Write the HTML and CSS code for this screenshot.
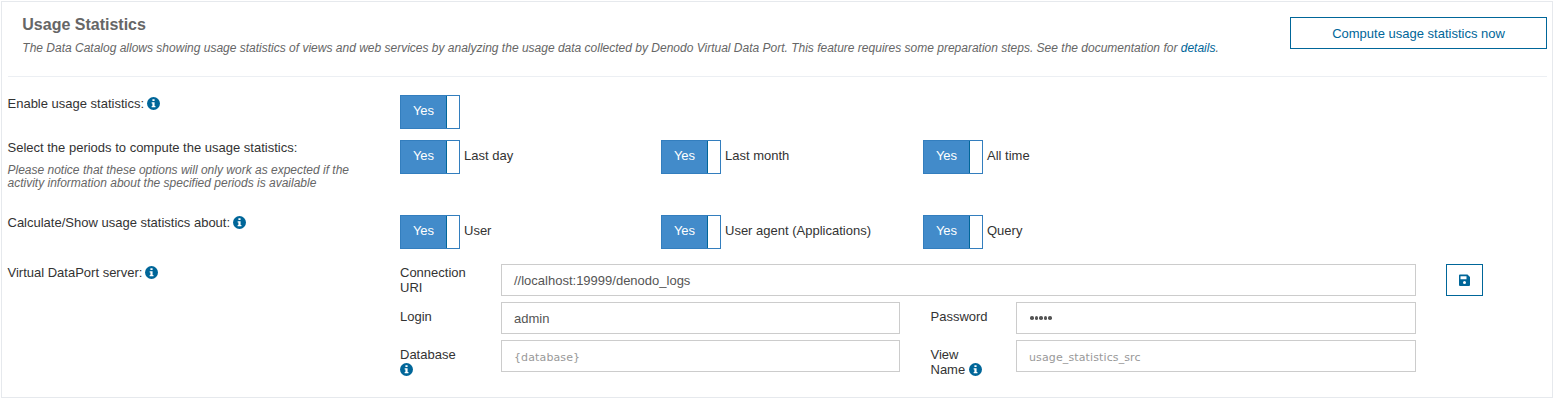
FILE: index.html
```html
<!DOCTYPE html>
<html lang="en">
<head>
<meta charset="utf-8">
<title>Usage Statistics</title>
<link rel="stylesheet" href="styles.css">
</head>
<body>
<svg class="defs" width="0" height="0">
  <symbol id="info" viewBox="0 0 12 12">
    <circle cx="6" cy="6" r="6" fill="#069"/>
    <path fill="#fff" d="M5 2h2v1.700H5zM4.300 4.800H7v3.500h.8v1.200H4.300V8.300H5V6h-.7z"/>
  </symbol>
</svg>
<section class="panel">
  <header class="head">
    <div class="intro">
      <h1 class="title">Usage Statistics</h1>
      <p class="desc">The Data Catalog allows showing usage statistics of views and web services by analyzing the usage data collected by Denodo Virtual Data Port. This feature requires some preparation steps. See the documentation for <a class="link">details</a>.</p>
    </div>
    <button class="compute">Compute usage statistics now</button>
  </header>

  <div class="row row-enable">
    <div class="label">Enable usage statistics: <svg class="info"><use href="#info"/></svg></div>
    <div class="option"><span class="toggle"><b class="on">Yes</b></span></div>
  </div>

  <div class="row row-periods">
    <div class="label">Select the periods to compute the usage statistics:
      <p class="note">Please notice that these options will only work as expected if the<br>activity information about the specified periods is available</p>
    </div>
    <div class="option"><span class="toggle"><b class="on">Yes</b></span><span>Last day</span></div>
    <div class="option"><span class="toggle"><b class="on">Yes</b></span><span>Last month</span></div>
    <div class="option"><span class="toggle"><b class="on">Yes</b></span><span>All time</span></div>
  </div>

  <div class="row row-about">
    <div class="label">Calculate/Show usage statistics about: <svg class="info"><use href="#info"/></svg></div>
    <div class="option"><span class="toggle"><b class="on">Yes</b></span><span>User</span></div>
    <div class="option"><span class="toggle"><b class="on">Yes</b></span><span>User agent (Applications)</span></div>
    <div class="option"><span class="toggle"><b class="on">Yes</b></span><span>Query</span></div>
  </div>

  <div class="row row-server">
    <div class="label">Virtual DataPort server: <svg class="info"><use href="#info"/></svg></div>
    <div class="form">
      <div class="name first">Connection<br>URI</div>
      <div class="field wide">//localhost:19999/denodo_logs</div>
      <div class="name">Login</div>
      <div class="field">admin</div>
      <div class="name second">Password</div>
      <div class="field"><span class="dots"><i></i><i></i><i></i><i></i><i></i></span></div>
      <div class="name">Database<br><svg class="info"><use href="#info"/></svg></div>
      <div class="field hint">{database}</div>
      <div class="name second">View<br>Name <svg class="info"><use href="#info"/></svg></div>
      <div class="field hint">usage_statistics_src</div>
    </div>
    <button class="save" aria-label="Save">
      <svg width="11" height="12" viewBox="0 0 11 12"><path fill="#069" fill-rule="evenodd" d="M1 .4h7.500L11 3v8a1 1 0 0 1-1 1H1a1 1 0 0 1-1-1V1.400a1 1 0 0 1 1-1zM1.500 2.200v3h6v-3zM5.500 6.900a1.500 1.500 0 1 0 0 3 1.500 1.500 0 0 0 0-3z"/></svg>
    </button>
  </div>
</section>
</body>
</html>
```
FILE: styles.css
```css
* { box-sizing: border-box; }
body {
  margin: 0;
  padding: 1px 1px 3px;
  background: #fff;
  color: #333;
  font: 13px/15px "Liberation Sans", Arial, sans-serif;
}
.defs { display: block; }
.panel {
  height: 397px;
  border: 1px solid #e6e9ed;
  padding: 0 5px 0 6px;
}
.head {
  display: flex;
  justify-content: space-between;
  height: 75px;
  padding: 15px 0 0 14.300px;
  border-bottom: 1px solid #eceff3;
}
.title {
  margin: -2px 0 0;
  font-size: 16px;
  line-height: 20px;
  color: #666;
}
.desc {
  margin: 6px 0 0;
  font-size: 12px;
  font-style: italic;
  color: #666;
  white-space: nowrap;
}
.link { color: #069; }
.compute, .save {
  padding: 0;
  border: 1px solid #069;
  background: #fff;
  color: #069;
  font: 13px/15px "Liberation Sans", Arial, sans-serif;
}
.compute { width: 257px; height: 32px; }
.row {
  display: grid;
  grid-template-columns: 392px 261px 262px 1fr;
  align-items: start;
}
.row-enable { height: 45px; padding-top: 18px; }
.row-periods { height: 75px; padding-top: 18px; }
.row-about { height: 67px; padding-top: 18px; }
.row-server { grid-template-columns: 392px 1016px 1fr; }
.label { padding-top: 1px; margin-left: -0.500px; white-space: nowrap; }
.row-periods .label, .row-about .label { padding-top: 0; }
.info { width: 13px; height: 13px; vertical-align: -2px; }
.label .info { margin-left: -0.500px; }
.note {
  margin: 9px 0 0;
  color: #666;
  font-size: 12px;
  font-style: italic;
  line-height: 13px;
}
.option { display: flex; gap: 4px; height: 34px; line-height: 32px; white-space: nowrap; }
.toggle {
  width: 60px;
  height: 34px;
  border: 1px solid #337ebe;
  background: #fff;
}
.on {
  display: block;
  width: 46px;
  height: 32px;
  border-right: 1px solid #069;
  background: #428bca;
  color: #fff;
  font-weight: 400;
  line-height: 30px;
  text-align: center;
}
.form {
  display: grid;
  grid-template-columns: 101px 399px 116px 400px;
  grid-auto-rows: 32px;
  row-gap: 6px;
}
.name { padding-top: 7px; white-space: nowrap; }
.first { padding-top: 1px; }
.second { padding-left: 30.500px; }
.field {
  display: flex;
  align-items: center;
  padding-left: 12px;
  border: 1px solid #ccc;
  color: #555;
}
.wide { grid-column: 2 / 5; }
.hint {
  padding-top: 2px;
  color: #999;
  font: 11px/15px "DejaVu Sans", Verdana, sans-serif;
  letter-spacing: 0.120px;
}
.dots { display: flex; gap: 1px; padding-left: 1px; }
.dots i { width: 3.500px; height: 3.500px; border-radius: 50%; background: #555; }
.save {
  display: flex;
  align-items: center;
  justify-content: center;
  width: 37px;
  height: 32px;
  margin-left: 30px;
}
```
